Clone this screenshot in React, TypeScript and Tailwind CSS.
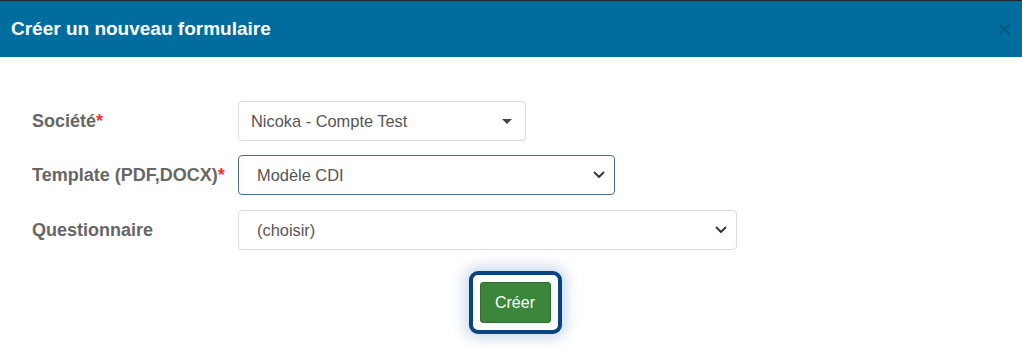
import React from 'react';

const font = { fontFamily: '"Liberation Sans", Arial, sans-serif' };

function Caret() {
    return (
        <svg width="10" height="5" viewBox="0 0 10 5" className="shrink-0">
            <path d="M0 0 L10 0 L5 5 Z" fill="#444" />
        </svg>
    );
}

function Chevron() {
    return (
        <svg width="12" height="8" viewBox="0 0 12 8" className="shrink-0">
            <path d="M1.5 1.5 L6 6 L10.5 1.5" fill="none" stroke="#333" strokeWidth="1.8" strokeLinecap="round" strokeLinejoin="round" />
        </svg>
    );
}

interface RowProps {
    label: string;
    required?: boolean;
    children: React.ReactNode;
}

function Row({ label, required, children }: RowProps) {
    return (
        <div className="flex items-center h-10">
            <div className="w-[206px] shrink-0 text-[18px] font-bold text-[#666]">
                {label}
                {required && <span className="text-[#e53935]">*</span>}
            </div>
            {children}
        </div>
    );
}

export default function App() {
    return (
        <div className="w-[1022px] h-[348px] bg-white overflow-hidden" style={font}>
            <div className="h-px bg-[#1d2838]" />
            <div className="h-[56px] bg-[#006d9e] flex items-center justify-between pl-[11px] pr-[11px]">
                <h2 className="text-[19px] font-bold text-white">Créer un nouveau formulaire</h2>
                {/* close icon, barely visible on the header */}
                <svg width="11" height="11" viewBox="0 0 11 11" className="mr-[1px]">
                    <path d="M1.5 1.5 L9.5 9.5 M9.5 1.5 L1.5 9.5" stroke="#0b5a85" strokeWidth="2.4" strokeLinecap="square" />
                </svg>
            </div>

            <div className="pl-8 pt-[44px] flex flex-col">
                <Row label="Société" required>
                    <div className="w-[288px] h-10 border border-[#dcdcdc] rounded flex items-center justify-between pl-3 pr-[13px] text-[16.4px] text-[#555]">
                        <span>Nicoka - Compte Test</span>
                        <Caret />
                    </div>
                </Row>
                <div className="h-[14px]" />
                <Row label="Template (PDF,DOCX)" required>
                    <div className="w-[377px] h-10 border border-[#4f6e93] rounded flex items-center justify-between pl-[18px] pr-[9px] text-[16.4px] text-[#555]">
                        <span>Modèle CDI</span>
                        <Chevron />
                    </div>
                </Row>
                <div className="h-[15px]" />
                <Row label="Questionnaire">
                    <div className="w-[499px] h-10 border border-[#dcdcdc] rounded flex items-center justify-between pl-[18px] pr-[9px] text-[16.4px] text-[#555]">
                        <span>(choisir)</span>
                        <Chevron />
                    </div>
                </Row>
            </div>

            <div className="flex justify-center pt-[21px] pl-[8px]">
                <div className="border-4 border-[#0a4480] rounded-[9px] p-[7px] bg-white shadow-[0_0_14px_4px_rgba(40,100,170,0.25)]">
                    <button className="w-[71px] h-[41px] bg-[#3b863b] border border-[#2f6f2f] rounded-[3px] text-white text-base">
                        Créer
                    </button>
                </div>
            </div>
        </div>
    );
}
